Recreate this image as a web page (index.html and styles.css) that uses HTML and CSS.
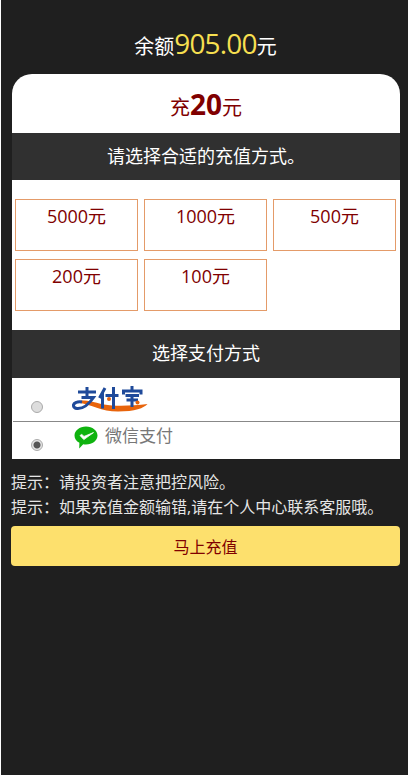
FILE: index.html
```html
<!DOCTYPE html>
<html lang="zh-CN">
<head>
    <meta charset="UTF-8">
    <meta name="viewport" content="width=device-width, initial-scale=1.0">
    <title>充值</title>
    <link rel="stylesheet" href="styles.css">
</head>
<body>
    <div class="page">
        <div class="balance">余额<span class="balance-num">905.00</span>元</div>
        <div class="card">
            <div class="charge">充<b>20</b>元</div>
            <div class="bar">请选择合适的充值方式。</div>
            <div class="amounts">
                <div class="amount">5000元</div>
                <div class="amount">1000元</div>
                <div class="amount">500元</div>
                <div class="amount">200元</div>
                <div class="amount">100元</div>
            </div>
            <div class="bar bar-pay">选择支付方式</div>
            <div class="pay-list">
                <div class="pay-row">
                    <span class="radio"></span>
                    <svg class="alipay" width="76" height="26" viewBox="0 0 76 26">
                        <path d="M8 15C17 13 27 19 40 19.5C52 20 64 19.5 75.5 18C72 22 63 25.5 46 25.5C29 25.5 19 18.5 8 17Z" fill="#e8640c"/>
                        <path d="M6 6H24M15 1V11M9.5 11.5H21.5C17 18 11 23 5 22.5C1 22 0 18 4 16.5C6 15.5 8 15.5 10 16" fill="none" stroke="#1f4a9a" stroke-width="3"/>
                        <path d="M33 2L27.5 12M30.5 7V22.5M33.5 9.5H46.5M41.5 1V23" fill="none" stroke="#1f4a9a" stroke-width="3"/>
                        <path d="M60 0V4M51.5 8.5V5H69V8.5M53.5 9.5H67M54.5 14H66M60 9.5V21" fill="none" stroke="#1f4a9a" stroke-width="3"/>
                        <circle cx="37" cy="13" r="2" fill="#e8640c"/>
                        <circle cx="65.5" cy="16.5" r="2" fill="#e8640c"/>
                    </svg>
                </div>
                <div class="pay-row pay-row-wx">
                    <span class="radio radio-on"></span>
                    <svg class="wechat" width="24" height="23" viewBox="0 0 24 23">
                        <path d="M12 0.5C18.4 0.5 23.5 4.5 23.5 9.5C23.5 14.5 18.4 18.5 12 18.5C11 18.5 10.1 18.4 9.2 18.2L5.2 22.5L5.4 16.8C2.4 15.2 0.5 12.5 0.5 9.5C0.5 4.5 5.6 0.5 12 0.5Z" fill="#0fb30f"/>
                        <path d="M6 9.5L9.8 13.6L19.5 6.6L10 10.4L7.8 8.4Z" fill="#fff" stroke="#fff" stroke-width="0.8"/>
                    </svg>
                    <span class="wechat-text">微信支付</span>
                </div>
            </div>
        </div>
        <p class="tip">提示：请投资者注意把控风险。</p>
        <p class="tip">提示：如果充值金额输错,请在个人中心联系客服哦。</p>
        <button class="submit" type="button">马上充值</button>
    </div>
</body>
</html>
```
FILE: styles.css
```css
* {
    box-sizing: border-box;
}
html, body {
    height: 100%;
}
body {
    margin: 0;
    padding: 0;
    background-color: #fff;
    font-family: "Open Sans", "Noto Sans CJK SC", sans-serif;
}
.page {
    min-height: 100%;
    margin-left: 1px;
    padding: 0 8px 0 10px;
    background-color: #1f1f1f;
    color: #fff;
}
.balance {
    padding-top: 26px;
    height: 74px;
    text-align: center;
    font-size: 20px;
    line-height: 34px;
}
.balance-num {
    color: #f6df50;
    font-size: 28px;
    letter-spacing: -0.8px;
}
.card {
    margin-left: 1px;
    background-color: #fff;
    border-radius: 20px 20px 0 0;
    overflow: hidden;
}
.charge {
    height: 59px;
    text-align: center;
    color: #800000;
    font-size: 20px;
    line-height: 60px;
}
.charge b {
    font-size: 28px;
}
.bar {
    height: 47px;
    background-color: #303030;
    text-align: center;
    font-size: 18px;
    line-height: 47px;
}
.bar-pay {
    height: 48px;
    margin-top: 19px;
}
.amounts {
    display: grid;
    grid-template-columns: repeat(3, 123px);
    gap: 8px 6px;
    padding: 19px 3px 0;
}
.amount {
    height: 52px;
    border: 1px solid #e49b69;
    text-align: center;
    color: #800000;
    font-size: 18px;
    line-height: 33px;
}
.pay-list {
    margin-left: 1px;
}
.pay-row {
    display: flex;
    align-items: flex-start;
    height: 44px;
    border-bottom: 1px solid #888;
}
.pay-row-wx {
    height: 37px;
    border-bottom: 0;
}
.radio {
    flex: none;
    width: 12px;
    height: 12px;
    margin: 23px 0 0 18px;
    border: 1px solid #aaa;
    border-radius: 50%;
    background-color: #ddd;
}
.radio-on {
    margin-top: 17px;
    background: radial-gradient(circle, #555 0, #555 3px, #e4e4e4 4px);
}
.alipay {
    margin: 8px 0 0 29px;
}
.wechat {
    margin: 4px 0 0 31px;
}
.wechat-text {
    margin-left: 7px;
    color: #777;
    font-size: 17px;
    line-height: 28px;
}
.tip {
    margin: 0;
    color: #e6e6e6;
    font-size: 16px;
    line-height: 25px;
}
.tip:first-of-type {
    margin-top: 11px;
}
.submit {
    display: block;
    width: 100%;
    height: 40px;
    margin-top: 6px;
    border: 0;
    border-radius: 4px;
    background-color: #fde06d;
    color: #800000;
    font-family: inherit;
    font-size: 16px;
}
```
